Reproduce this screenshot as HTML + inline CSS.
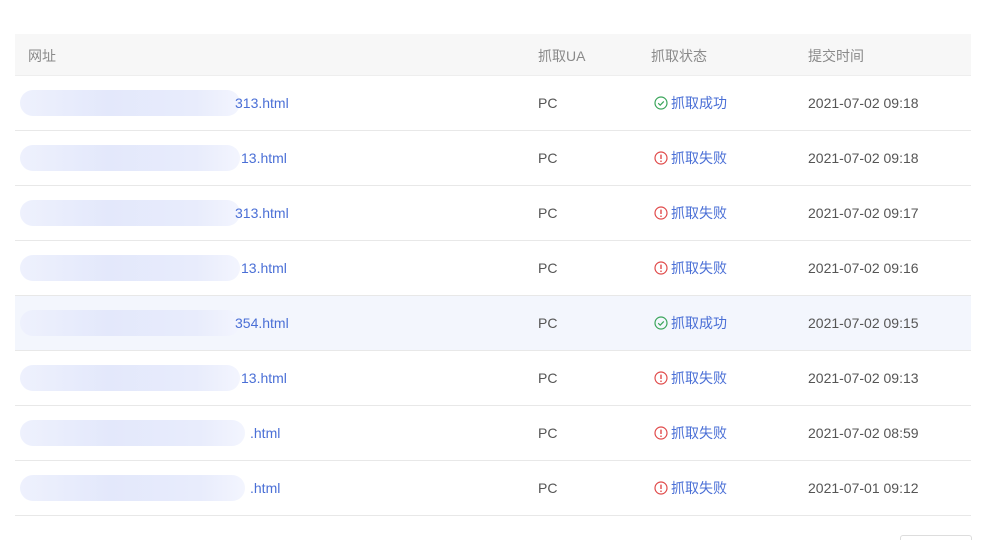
<!DOCTYPE html>
<html><head><meta charset="utf-8"><style>
html,body{margin:0;width:1007px;height:540px;overflow:hidden}
body{background:#fff;font-family:"Liberation Sans","Noto Sans CJK SC",sans-serif;font-size:14px;color:#555;position:relative}
.hd{position:absolute;left:15px;top:34px;width:956px;height:41px;background:#f7f7f7;border-bottom:1px solid #eee}
.hd span{position:absolute;top:12px;color:#8a8a8a}
.row{position:absolute;left:15px;width:956px;height:54px;border-bottom:1px solid #e8e8e8}
.row>span{position:absolute;top:18px;line-height:18px}
.blur{position:absolute;left:5px;top:14px;width:220px;height:26px;border-radius:13px;background:linear-gradient(90deg,#eef1fd,#e3e8fb 40%,#e8ecfc 80%,#f3f5fe)}
.url{color:#4a6fd6}
.st{color:#4a6fd6;display:flex;align-items:center}
.st svg{margin-right:3px}
.hl{background:#f3f6fd}
</style></head><body>
<svg width="0" height="0" style="position:absolute"><defs>
<symbol id="ok" viewBox="0 0 14 14"><circle cx="7" cy="7" r="6" fill="none" stroke="#3aa55a" stroke-width="1.2"/><path d="M4.2 7.2l2 2 3.6-3.8" fill="none" stroke="#3aa55a" stroke-width="1.2"/></symbol>
<symbol id="er" viewBox="0 0 14 14"><circle cx="7" cy="7" r="6" fill="none" stroke="#e04a4a" stroke-width="1.2"/><path d="M7 3.6v4.4" stroke="#e04a4a" stroke-width="1.4"/><circle cx="7" cy="10.2" r="0.8" fill="#e04a4a"/></symbol>
</defs></svg>
<div class="hd"><span style="left:13px">网址</span><span style="left:523px">抓取UA</span><span style="left:636px">抓取状态</span><span style="left:793px">提交时间</span></div>

<div class="row" style="top:76px"><div class="blur"></div><span class="url" style="left:220px">313.html</span><span style="left:523px">PC</span><span class="st" style="left:639px"><svg width="14" height="14"><use href="#ok"/></svg>抓取成功</span><span style="left:793px">2021-07-02 09:18</span></div>
<div class="row" style="top:131px"><div class="blur"></div><span class="url" style="left:226px">13.html</span><span style="left:523px">PC</span><span class="st" style="left:639px"><svg width="14" height="14"><use href="#er"/></svg>抓取失败</span><span style="left:793px">2021-07-02 09:18</span></div>
<div class="row" style="top:186px"><div class="blur"></div><span class="url" style="left:220px">313.html</span><span style="left:523px">PC</span><span class="st" style="left:639px"><svg width="14" height="14"><use href="#er"/></svg>抓取失败</span><span style="left:793px">2021-07-02 09:17</span></div>
<div class="row" style="top:241px"><div class="blur"></div><span class="url" style="left:226px">13.html</span><span style="left:523px">PC</span><span class="st" style="left:639px"><svg width="14" height="14"><use href="#er"/></svg>抓取失败</span><span style="left:793px">2021-07-02 09:16</span></div>
<div class="row hl" style="top:296px"><div class="blur"></div><span class="url" style="left:220px">354.html</span><span style="left:523px">PC</span><span class="st" style="left:639px"><svg width="14" height="14"><use href="#ok"/></svg>抓取成功</span><span style="left:793px">2021-07-02 09:15</span></div>
<div class="row" style="top:351px"><div class="blur"></div><span class="url" style="left:226px">13.html</span><span style="left:523px">PC</span><span class="st" style="left:639px"><svg width="14" height="14"><use href="#er"/></svg>抓取失败</span><span style="left:793px">2021-07-02 09:13</span></div>
<div class="row" style="top:406px"><div class="blur" style="width:225px"></div><span class="url" style="left:235px">.html</span><span style="left:523px">PC</span><span class="st" style="left:639px"><svg width="14" height="14"><use href="#er"/></svg>抓取失败</span><span style="left:793px">2021-07-02 08:59</span></div>
<div class="row" style="top:461px"><div class="blur" style="width:225px"></div><span class="url" style="left:235px">.html</span><span style="left:523px">PC</span><span class="st" style="left:639px"><svg width="14" height="14"><use href="#er"/></svg>抓取失败</span><span style="left:793px">2021-07-01 09:12</span></div>

<div style="position:absolute;left:900px;top:535px;width:70px;height:4px;border:1px solid #ddd;border-bottom:none;border-radius:3px 3px 0 0"></div>
</body></html>
